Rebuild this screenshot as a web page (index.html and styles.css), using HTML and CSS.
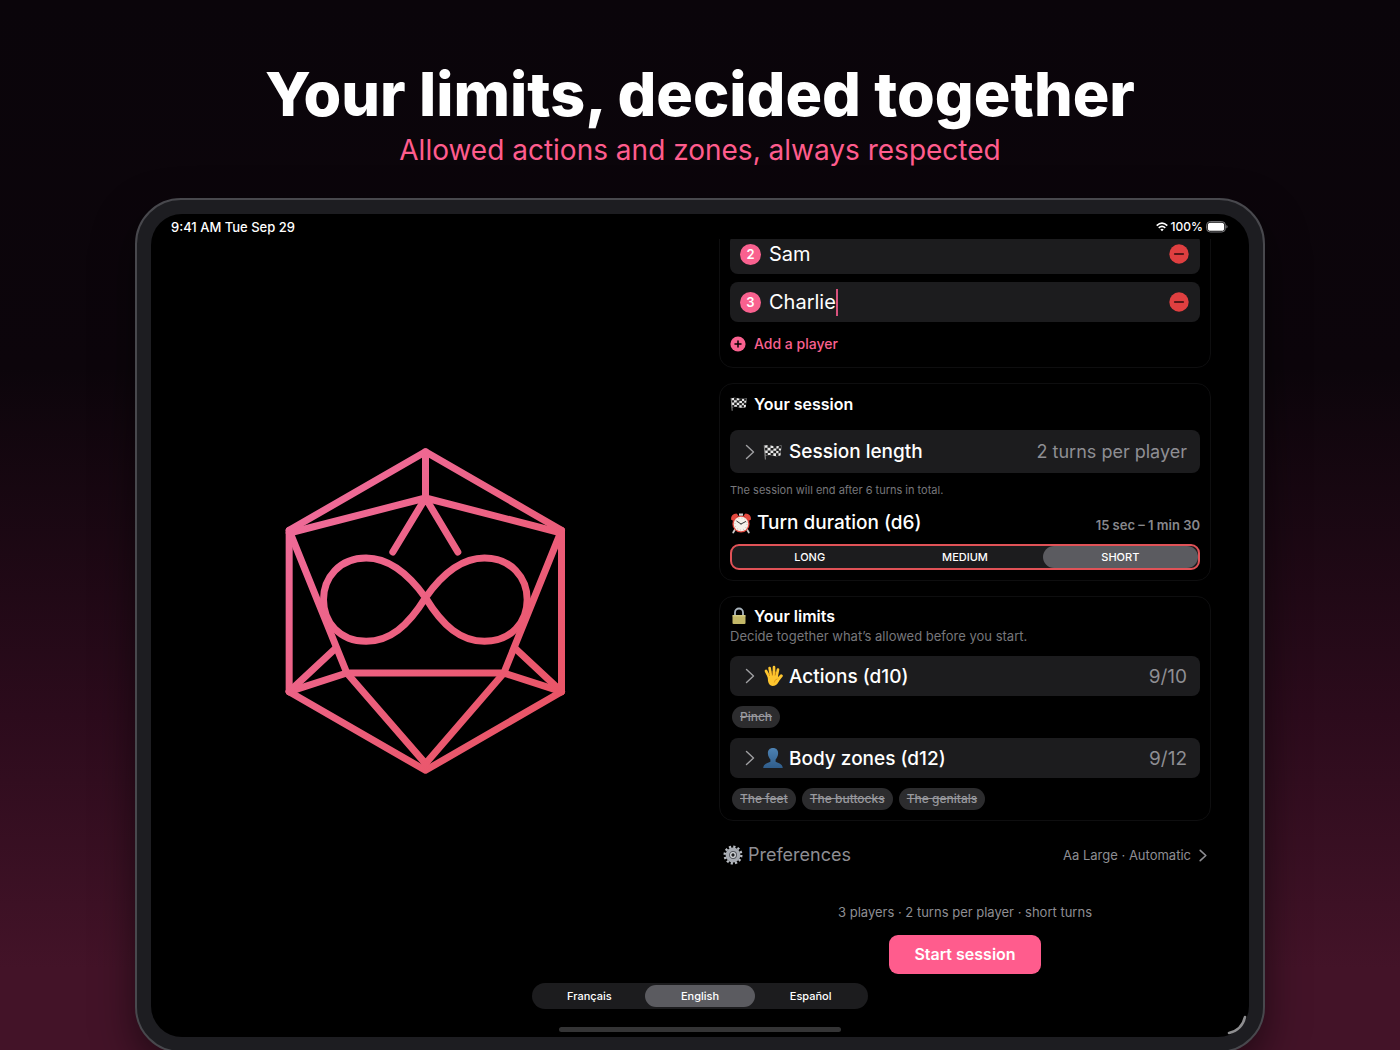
FILE: index.html
```
<!DOCTYPE html>
<html lang="en">
<head>
  <meta charset="UTF-8">
  <meta name="viewport" content="width=device-width, initial-scale=1.0">
  <title>Your limits, decided together</title>
  <link rel="stylesheet" href="styles.css">
</head>
<body>

  <!-- Shared icons -->
  <svg class="sprite" aria-hidden="true">
    <symbol id="flag" viewBox="0 0 20 16">
      <path d="M1.5 1.5 Q5 .5 9 1.7 T18.5 1.5 L17.5 11.5 Q13 12.8 9.5 11.6 T2.3 12Z" fill="#e9e9e9"/>
      <path d="M4.5 1.1h3v2.6h-3zM10.4 2h3v2.6h-3zM15.8 2h2.6l-.3 2.5h-2.6zM2 3.7h2.5v2.7H2zM7.5 3.9h2.9v2.6H7.5zM13.3 4.6h2.6v2.5h-2.6zM4.7 6.4h2.8V9H4.7zM10.3 6.8h2.9v2.5h-2.9zM15.5 6.6h2.4l-.3 2.6h-2.2zM2.3 9h2.5v2.6H2.3zM7.6 9h2.7v2.6H7.6zM13 9.3h2.5V12H13z" fill="#222"/>
      <path d="M1.3 1.2 2.4 15.5" stroke="#8b8b8b" stroke-width="1.1"/>
    </symbol>
    <symbol id="chevron" viewBox="0 0 10 16">
      <path d="M1.5 1.5 8.5 8 1.5 14.5" fill="none" stroke="currentColor" stroke-linecap="round" stroke-linejoin="round"/>
    </symbol>
    <symbol id="minus" viewBox="0 0 20 20">
      <circle cx="10" cy="10" r="9.7" fill="#df3f40"/>
      <path d="M5.7 10h8.6" stroke="#2a0b0c" stroke-width="1.6" stroke-linecap="round"/>
    </symbol>
  </svg>

  <header class="hero">
    <h1>Your limits, decided together</h1>
    <p>Allowed actions and zones, always respected</p>
  </header>

  <div class="device">
    <div class="screen">

      <div class="status-bar">
        <span>9:41 AM&nbsp;Tue Sep 29</span>
        <span class="status-right">
          <svg width="12" height="10" viewBox="0 0 12 10" fill="none" stroke="#fff" stroke-width="1.6">
            <path d="M.7 3.6Q6-1.2 11.3 3.6M2.7 5.9Q6 3 9.3 5.9"/>
            <path d="M4.3 7.5Q6 6.1 7.7 7.5L6 9.3Z" fill="#fff" stroke="none"/>
          </svg>
          <span>100%</span>
          <svg width="22" height="12" viewBox="0 0 22 12">
            <rect x=".6" y=".6" width="18.8" height="10.4" rx="3.6" fill="none" stroke="#77777a"/>
            <rect x="1.8" y="1.8" width="16.4" height="8" rx="2.6" fill="#fff"/>
            <path d="M20.4 4v3.6Q21.6 7 21.6 5.8T20.4 4Z" fill="#77777a"/>
          </svg>
        </span>
      </div>

      <main class="panes">
        <div class="logo-pane">
          <svg class="logo" viewBox="77 50 842 984" role="img" aria-label="Twenty-sided die with an infinity sign">
            <defs>
              <linearGradient id="pink" gradientUnits="userSpaceOnUse" x1="100" y1="200" x2="850" y2="950">
                <stop offset="0" stop-color="#ef6c9b"/>
                <stop offset="1" stop-color="#e95363"/>
              </linearGradient>
            </defs>
            <g fill="none" stroke="url(#pink)" stroke-width="21" stroke-linecap="round" stroke-linejoin="round">
              <path d="M498 64 906 300V784L498 1020 89 784V300Z"/>
              <path d="M498 64V203M89 308 498 203 906 308"/>
              <path d="M400 365 498 203 595 365"/>
              <path d="M89 300 262 728H733L906 300"/>
              <path d="M89 784 262 728 498 1000 733 728 906 784"/>
              <path d="M89 784 226 656M906 784 769 656"/>
              <path d="M498 502C445 428 388 383 320 383 240 383 192 442 192 508 192 575 240 633 320 633 390 633 445 588 498 502 550 428 607 383 675 383 755 383 803 442 803 508 803 575 755 633 675 633 605 633 550 588 498 502Z"/>
            </g>
          </svg>
        </div>

        <div class="setup">
          <section class="card players">
            <div class="field">
              <label class="badge" for="player2">2</label>
              <input type="text" id="player2" value="Sam">
              <button class="remove" aria-label="Remove Sam"><svg width="20" height="20"><use href="#minus"/></svg></button>
            </div>
            <div class="field">
              <label class="badge" for="player3">3</label>
              <input type="text" id="player3" value="Charlie">
              <span class="caret"></span>
              <button class="remove" aria-label="Remove Charlie"><svg width="20" height="20"><use href="#minus"/></svg></button>
            </div>
            <button class="add">
              <svg width="16" height="16" viewBox="0 0 16 16">
                <circle cx="8" cy="8" r="7.6" fill="#f9618f"/>
                <path d="M8 5v6M5 8h6" stroke="#000" stroke-width="1.5" stroke-linecap="round"/>
              </svg>
              Add a player
            </button>
          </section>

          <section class="card session">
            <h2><svg width="18" height="16"><use href="#flag"/></svg>Your session</h2>
            <button class="row row-tall">
              <svg class="chevron" width="10" height="16"><use href="#chevron"/></svg>
              <svg class="emoji" width="20" height="18"><use href="#flag"/></svg>
              <span class="row-title">Session length</span>
              <span class="row-value">2 turns per player</span>
            </button>
            <p class="hint">The session will end after 6 turns in total.</p>
            <div class="duration">
              <svg width="22" height="22" viewBox="0 0 22 22">
                <path d="M5 17.5 3.2 20.5M17 17.5l1.8 3" stroke="#c9c9c9" stroke-width="1.8" stroke-linecap="round"/>
                <circle cx="11" cy="12" r="8.6" fill="#e3493f"/>
                <path d="M1 7.5Q.8 2 6.5 1.5L8.5 3.5 3 8.8ZM21 7.5Q21.2 2 15.5 1.5L13.5 3.5 19 8.8Z" fill="#e3493f"/>
                <path d="M9 1.5h4v2.2H9z" fill="#d4d4d4"/>
                <circle cx="11" cy="12" r="7.3" fill="#f6f1ea"/>
                <path d="M11 12 6.8 9.2M11 12l4.6-2.4" stroke="#333" stroke-width="1" stroke-linecap="round"/>
                <circle cx="11" cy="12" r="6" fill="none" stroke="#a9a39b" stroke-width="1" stroke-dasharray=".6 2.54"/>
              </svg>
              <h3>Turn duration (d6)</h3>
              <span class="range">15 sec – 1 min 30</span>
            </div>
            <div class="segmented turns" role="radiogroup" aria-label="Turn duration">
              <label><input type="radio" name="turns"><span>LONG</span></label>
              <label><input type="radio" name="turns"><span>MEDIUM</span></label>
              <label><input type="radio" name="turns" checked><span>SHORT</span></label>
            </div>
          </section>

          <section class="card limits">
            <h2>
              <svg width="18" height="18" viewBox="0 0 18 18">
                <path d="M5 9V5.5a4 4 0 0 1 8 0V9" fill="none" stroke="#a9b4bd" stroke-width="1.8"/>
                <rect x="2.5" y="8" width="13" height="9" rx="1" fill="#c3b868"/>
                <path d="M2.5 8.8h13" stroke="#dcd491" stroke-width="1"/>
              </svg>Your limits
            </h2>
            <p class="sub">Decide together what’s allowed before you start.</p>
            <button class="row">
              <svg class="chevron" width="10" height="16"><use href="#chevron"/></svg>
              <svg class="emoji" width="20" height="22" viewBox="0 0 20 22">
                <g stroke="#fdc52f" stroke-width="2.7" stroke-linecap="round">
                  <path d="M6.2 12 3 6M8 11 6.6 3M11 11V2.2M13.5 12 15 4.5"/>
                  <path d="M14.5 15.5 18.3 10.8" stroke-width="3"/>
                </g>
                <path d="M4.6 10.5 14.8 10Q16.5 13.5 15.5 17 13.5 21 9.5 21 5.8 20.5 5 16Z" fill="#fdc52f"/>
                <path d="M6.6 11 6 8M9.3 10.5 9 6M12.1 10.7 12.6 6.5M11.3 17.5Q11.5 14.5 14.5 13.8" stroke="#dc8f14" stroke-width=".8" fill="none"/>
              </svg>
              <span class="row-title">Actions (d10)</span>
              <span class="row-value">9/10</span>
            </button>
            <div class="chips">
              <s>Pinch</s>
            </div>
            <button class="row">
              <svg class="chevron" width="10" height="16"><use href="#chevron"/></svg>
              <svg class="emoji" width="20" height="22" viewBox="0 0 20 22">
                <defs>
                  <linearGradient id="bust" x1="0" y1="0" x2="0" y2="1">
                    <stop offset="0" stop-color="#4d82b3"/>
                    <stop offset="1" stop-color="#2f5d8b"/>
                  </linearGradient>
                </defs>
                <path d="M10 1C13.6 1 15.3 3.5 15.1 6.6 15 9.5 13.6 11.2 12.6 12.6V14.8C15 16.3 19.2 16.3 19.8 21H.2C.8 16.3 5 16.3 7.4 14.8V12.6C6.4 11.2 5 9.5 4.9 6.6 4.7 3.5 6.4 1 10 1Z" fill="url(#bust)"/>
              </svg>
              <span class="row-title">Body zones (d12)</span>
              <span class="row-value">9/12</span>
            </button>
            <div class="chips">
              <s>The feet</s>
              <s>The buttocks</s>
              <s>The genitals</s>
            </div>
          </section>

          <button class="preferences">
            <svg width="20" height="20" viewBox="0 0 20 20">
              <circle cx="10" cy="10" r="8.3" fill="none" stroke="#b9bdc3" stroke-width="2.4" stroke-dasharray="2.2 2.146"/>
              <circle cx="10" cy="10" r="5.7" fill="#55585e" stroke="#a6aab1" stroke-width="3.4"/>
              <circle cx="10" cy="10" r="2.3" fill="#1c1d20" stroke="#d7dade" stroke-width="1.3"/>
            </svg>
            <span class="pref-title">Preferences</span>
            <span class="pref-value">Aa Large · Automatic</span>
            <svg class="pref-arrow" width="8" height="13" viewBox="0 0 10 16"><use href="#chevron"/></svg>
          </button>

          <div class="start">
            <p>3 players · 2 turns per player · short turns</p>
            <button class="start-btn">Start session</button>
          </div>
        </div>
      </main>

      <div class="segmented language" role="radiogroup" aria-label="Language">
        <label><input type="radio" name="lang"><span>Français</span></label>
        <label><input type="radio" name="lang" checked><span>English</span></label>
        <label><input type="radio" name="lang"><span>Español</span></label>
      </div>
      <div class="home-bar"></div>

      <svg class="corner" width="22" height="22" viewBox="0 0 22 22">
        <path d="M19 3Q16 16 3 19" fill="none" stroke="#8e8e90" stroke-width="2.6" stroke-linecap="round"/>
      </svg>
    </div>
  </div>

</body>
</html>
```

FILE: styles.css
```
* {
  box-sizing: border-box;
}
body {
  margin: 0;
  min-height: 100vh;
  overflow: hidden;
  font-family: Inter, "Liberation Sans", sans-serif;
  color: #fff;
  background: linear-gradient(#0a050a 0%, #0c050b 35%, #2c0b1c 68%, #431328 92%, #431328 100%);
}
h1, h2, h3, p {
  margin: 0;
}
button {
  font: inherit;
  color: inherit;
  background: none;
  border: none;
  padding: 0;
  cursor: pointer;
}
svg {
  flex: none;
}
.sprite {
  display: none;
}

/* Headline */
.hero {
  padding: 58px 24px 31px;
  text-align: center;
}
.hero h1 {
  font-size: 61px;
  line-height: 73px;
  font-weight: 800;
}
.hero p {
  margin-top: 2px;
  font-size: 28px;
  line-height: 34px;
  color: #ff5c8d;
}

/* Tablet */
.device {
  margin: 0 135px;
  padding: 14px;
  border: 2px solid #48484d;
  border-radius: 46px;
  background: #1d1d21;
  box-shadow: 0 16px 40px rgba(0, 0, 0, 0.5);
}
.screen {
  position: relative;
  display: flex;
  flex-direction: column;
  padding-bottom: 5px;
  border-radius: 31px;
  background: #000;
}
.status-bar {
  display: flex;
  justify-content: space-between;
  height: 25px;
  padding: 0 21px 0 20px;
  font-size: 13px;
  line-height: 26px;
  font-weight: 500;
}
.status-right {
  display: flex;
  align-items: center;
  gap: 3px;
  font-size: 12px;
}
.panes {
  display: grid;
  grid-template-columns: 1fr 1fr;
}
.logo-pane {
  display: flex;
  align-items: center;
  justify-content: center;
}
.logo {
  width: 281px;
  height: 328px;
}
.setup {
  display: flex;
  flex-direction: column;
  padding: 0 38px 9px 19px;
  overflow: hidden;
}

/* Cards */
.card {
  padding: 10px;
  border: 1px solid #0e0e0f;
  border-radius: 14px;
}
.card h2 {
  display: flex;
  align-items: center;
  gap: 6px;
  font-size: 16px;
  line-height: 20px;
  font-weight: 600;
}
.players {
  display: flex;
  flex-direction: column;
  gap: 8px;
  margin-top: -16px;
}
.session, .limits {
  margin-top: 15px;
}
.limits {
  padding-top: 9px;
}
.field {
  display: flex;
  align-items: center;
  height: 40px;
  padding: 0 11px 0 10px;
  border-radius: 8px;
  background: #1c1c1e;
}
.badge {
  width: 21px;
  margin-right: 8px;
  border-radius: 50%;
  background: #f9618f;
  font-size: 13px;
  line-height: 21px;
  font-weight: 600;
  text-align: center;
}
.field input {
  field-sizing: content;
  padding: 0;
  border: none;
  outline: none;
  background: none;
  font: inherit;
  font-size: 20px;
  color: #fff;
}
.caret {
  width: 2px;
  height: 27px;
  background: #d9527d;
}
.remove {
  display: flex;
  margin-left: auto;
}
.add {
  display: flex;
  align-items: center;
  gap: 8px;
  margin: 4px 0 3px;
  font-size: 14px;
  line-height: 20px;
  font-weight: 500;
  color: #f9618f;
}
.row {
  display: flex;
  align-items: center;
  width: 100%;
  height: 40px;
  padding: 0 13px 0 15px;
  border-radius: 8px;
  background: #1c1c1e;
  font-size: 19px;
}
.row-tall {
  height: 43px;
  margin-top: 16px;
}
.chevron {
  color: #a0a0a3;
  stroke-width: 1.4;
}
.emoji {
  margin: 0 6px 0 8px;
}
.row-title {
  font-weight: 500;
}
.row-value {
  margin-left: auto;
  color: #8e8e93;
}
.row-tall .row-value {
  font-size: 18px;
}
.hint {
  margin-top: 9px;
  font-size: 11px;
  line-height: 16px;
  color: #77777b;
}
.duration {
  display: flex;
  align-items: center;
  gap: 5px;
  margin: 12px 0 8px;
}
.duration h3 {
  font-size: 19px;
  line-height: 26px;
  font-weight: 500;
}
.range {
  margin-left: auto;
  padding-top: 4px;
  font-size: 13px;
  font-weight: 600;
  color: #88888c;
}
.sub {
  font-size: 13px;
  line-height: 20px;
  margin-bottom: 10px;
  color: #77777b;
}
.chips {
  display: flex;
  gap: 6px;
  padding: 10px 2px;
}
.chips s {
  padding: 0 8px;
  border-radius: 11px;
  background: #2c2c2e;
  font-size: 12px;
  line-height: 22px;
  font-weight: 500;
  color: #98989d;
}
.limits .chips:last-child {
  padding-bottom: 0;
}

/* Segmented controls */
.segmented {
  display: grid;
  grid-template-columns: 1fr 1fr 1fr;
  background: #1c1c1e;
  font-size: 11px;
  font-weight: 500;
  text-align: center;
}
.segmented label {
  display: block;
  cursor: pointer;
}
.segmented input {
  position: absolute;
  opacity: 0;
}
.segmented span {
  display: block;
  border-radius: 12px;
  line-height: 22px;
}
.segmented input:checked + span {
  background: #5b5b60;
}
.turns {
  border: 2px solid #e05257;
  border-radius: 9px;
}
.language {
  align-self: center;
  width: 336px;
  padding: 2px;
  border-radius: 13px;
}

/* Footer of the setup column */
.preferences {
  display: flex;
  align-items: center;
  margin-top: 22px;
  padding: 0 4px;
  font-size: 18px;
  line-height: 24px;
  color: #8e8e93;
}
.pref-title {
  margin-left: 5px;
}
.pref-value {
  margin-left: auto;
  font-size: 13px;
}
.pref-arrow {
  margin-left: 8px;
  stroke-width: 2;
}
.start {
  display: flex;
  flex-direction: column;
  align-items: center;
  gap: 13px;
  margin-top: 35px;
  font-size: 13px;
  line-height: 20px;
  color: #8e8e93;
}
.start-btn {
  padding: 0 25px;
  border-radius: 9px;
  background: #ff5c8d;
  font-size: 16px;
  line-height: 39px;
  font-weight: 600;
  color: #fff;
}
.home-bar {
  align-self: center;
  width: 282px;
  height: 5px;
  margin-top: 18px;
  border-radius: 3px;
  background: #343435;
}
.corner {
  position: absolute;
  right: 1px;
  bottom: 1px;
}
```
